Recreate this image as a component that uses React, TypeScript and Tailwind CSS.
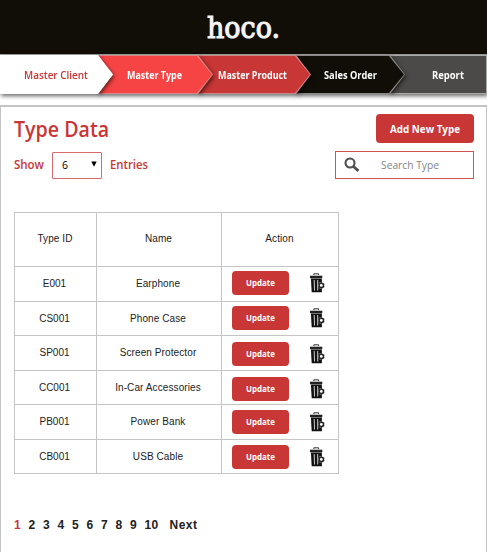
const heading = "font-['Open_Sans','Noto_Sans',sans-serif]";

const tabs = [
  { label: 'Master Client', box: 'w-[113px] z-50', edge: 'bg-white', fill: 'bg-white text-[#c83636]', text: 'pl-[24px]', len: 64, first: true },
  { label: 'Master Type', box: 'w-[115px] -ml-[15px] z-40', edge: 'bg-[#d88a86]', fill: 'bg-[#f64444] text-white', text: 'pl-[29px]', len: 55 },
  { label: 'Master Product', box: 'w-[113px] -ml-[15px] z-30', edge: 'bg-[#c98a86]', fill: 'bg-[#c83636] text-white', text: 'pl-[20px]', len: 69 },
  { label: 'Sales Order', box: 'w-[109px] -ml-[15px] z-20', edge: 'bg-[#8b8987]', fill: 'bg-[#110e08] text-white', text: 'pl-[28px]', len: 53 },
  { label: 'Report', box: 'w-[97px] -ml-[15px] z-10', edge: 'bg-[#a9a9a7]', fill: 'bg-[#4b4a48] text-white', text: 'pl-[42px]', len: 32, last: true },
];

const rows = [
  { id: 'E001', name: 'Earphone', h: 'h-[35px]', pad: 'pb-[2px]' },
  { id: 'CS001', name: 'Phone Case', h: 'h-[34px]', pad: 'pb-px' },
  { id: 'SP001', name: 'Screen Protector', h: 'h-[35px]', pad: 'pt-[2px]' },
  { id: 'CC001', name: 'In-Car Accessories', h: 'h-[34px]', pad: 'pt-[3px]' },
  { id: 'PB001', name: 'Power Bank', h: 'h-[35px]', pad: '' },
  { id: 'CB001', name: 'USB Cable', h: 'h-[34px]', pad: 'pt-px' },
];

type LabelProps = { text: string; width: number; size: number; weight: number; height?: number };

/* A single line of condensed lettering, fitted to a fixed measure. */
function Label({ text, width, size, weight, height = 18 }: LabelProps) {
  return (
    <svg width={width} height={height} className={`shrink-0 overflow-visible ${heading}`} fill="currentColor">
      <text x="0" y={Math.round(height / 2 + size * 0.34)} fontSize={size} fontWeight={weight} textLength={width} lengthAdjust="spacingAndGlyphs">
        {text}
      </text>
    </svg>
  );
}

function Trash() {
  return (
    <svg width="15" height="20" viewBox="0 0 15 20" className="shrink-0">
      <path d="M3.8 2V.8h4.8V2" fill="none" stroke="#333" strokeWidth="1" />
      <path d="M0 2.7h12.3v2.5H0z" fill="#222" />
      <path d="M.9 5.6h11v13.6H1.7z" fill="#111" />
      <path d="M4.2 7l.3 10.5M7.7 7v10.5" stroke="#ccc" strokeWidth="1" />
      <circle cx="11.3" cy="12.4" r="3.1" fill="#fff" />
      <circle cx="11.3" cy="12.4" r="2.2" fill="none" stroke="#222" strokeWidth="1.5" />
      <path d="M11.3 9.2v1M11.3 14.7v1M14.3 10.8l-.9.6M14.3 14.1l-.9-.6M8.4 10.8l.9.6M8.4 14.1l.9-.6" stroke="#222" strokeWidth="1.1" />
    </svg>
  );
}

export default function App() {
  return (
    <div className="flex h-[552px] w-[487px] flex-col overflow-hidden bg-white font-['Liberation_Sans',Arial,sans-serif]">
      <header className="flex h-[54px] shrink-0 justify-center bg-[#110e08] pt-px text-[#f5f5f5]">
        <svg width="73" height="52" fill="currentColor" stroke="currentColor" className="overflow-visible [font-family:'DejaVu_Serif',serif]">
          <text x="0" y="36.5" fontSize="29" strokeWidth="1.1" textLength="73" lengthAdjust="spacingAndGlyphs">hoco.</text>
        </svg>
      </header>

      <nav className="relative flex h-[40px] shrink-0 border-t border-[#a5a39f]">
        {tabs.map((t) => (
          <div key={t.label} className={`relative h-[39px] shrink-0 drop-shadow-[1px_2px_2px_rgba(0,0,0,0.6)] ${t.box}`}>
            <div className={`h-full ${t.first ? '' : 'py-px pr-px'} ${t.edge} ${t.last ? '' : '[clip-path:polygon(0_0,calc(100%_-_15px)_0,100%_50%,calc(100%_-_15px)_100%,0_100%)]'}`}>
              <div className={`flex h-full items-center ${t.text} ${t.fill} ${t.last ? '' : '[clip-path:polygon(0_0,calc(100%_-_15px)_0,100%_50%,calc(100%_-_15px)_100%,0_100%)]'}`}>
                <Label text={t.label} width={t.len} size={10.5} weight={t.first ? 650 : 750} />
              </div>
            </div>
          </div>
        ))}
      </nav>

      <main className="mt-[11px] flex grow flex-col border-x border-t-2 border-[#c4c4c4] pl-[13px] pr-[12px]">
        <div className="flex h-[44px] items-start justify-between text-[#c83636]">
          <div className="pt-[8px]"><Label text="Type Data" width={95} size={21.5} weight={550} height={30} /></div>
          <button className="mt-[7px] flex h-[29px] w-[98px] items-center justify-center rounded-[4px] bg-[#c83636] text-white">
            <Label text="Add New Type" width={70} size={11} weight={700} />
          </button>
        </div>
        <div className="flex h-[28px] items-center text-[#c83636]">
          <Label text="Show" width={30} size={12} weight={650} />
          <div className="ml-[8px] flex h-[27px] w-[50px] items-center justify-between rounded-[1px] border border-[#d76b6b] pl-[9px] pr-[4px] text-black">
            <Label text="6" width={6} size={11} weight={400} />
            <svg width="6" height="6" className="mb-[2px]"><path d="M.3.5h5.4L3 5.7z" /></svg>
          </div>
          <span className="ml-[8px]" />
          <Label text="Entries" width={38} size={12} weight={650} />
          <div className="ml-auto flex h-[28px] w-[139px] items-center border border-[#d05252] pl-[8px] text-[#858585]">
            <svg width="16" height="16" viewBox="0 0 16 16" fill="none" stroke="#505050">
              <circle cx="6" cy="6" r="4.5" strokeWidth="2.1" />
              <path d="M9.2 9.3l5.2 4.6" strokeWidth="2.8" />
            </svg>
            <span className="w-[21px]" />
            <Label text="Search Type" width={58} size={11} weight={400} />
          </div>
        </div>

        <table className="mt-[33px] w-[324px] table-fixed border-collapse text-[10px] text-[#222]">
          <colgroup>
            <col className="w-[82px]" />
            <col className="w-[125px]" />
            <col className="w-[117px]" />
          </colgroup>
          <thead>
            <tr className="h-[54px]">
              {['Type ID', 'Name', 'Action'].map((h) => (
                <th key={h} className="border border-[#c5c5c5] p-0 pb-[2px] pr-px font-normal tracking-[0.1px]">{h}</th>
              ))}
            </tr>
          </thead>
          <tbody>
            {rows.map((r) => (
              <tr key={r.id} className={`text-center leading-[12px] ${r.h}`}>
                <td className="border border-[#c5c5c5] p-0 pr-[2px]">{r.id}</td>
                <td className="border border-[#c5c5c5] p-0 pr-[2px] tracking-[0.1px]">{r.name}</td>
                <td className="border border-[#c5c5c5] p-0">
                  <div className={`flex h-[33px] items-center pl-[10px] ${r.pad}`}>
                    <button className="flex h-[24px] w-[57px] shrink-0 items-center justify-center rounded-[4px] bg-[#c83636] text-white">
                      <Label text="Update" width={29} size={9.5} weight={700} />
                    </button>
                    <span className="w-[21px]" />
                    <Trash />
                  </div>
                </td>
              </tr>
            ))}
          </tbody>
        </table>

        <div className="mt-[43px] flex text-[12px] font-bold leading-[16px] text-[#222]">
          {['1', '2', '3', '4', '5', '6', '7', '8', '9'].map((n) => (
            <span key={n} className={`w-[14.5px] ${n === '1' ? 'text-[#c83650]' : ''}`}>{n}</span>
          ))}
          <span className="w-[25px] tracking-[0.3px]">10</span>
          <span className="tracking-[0.5px]">Next</span>
        </div>
      </main>
    </div>
  );
}
